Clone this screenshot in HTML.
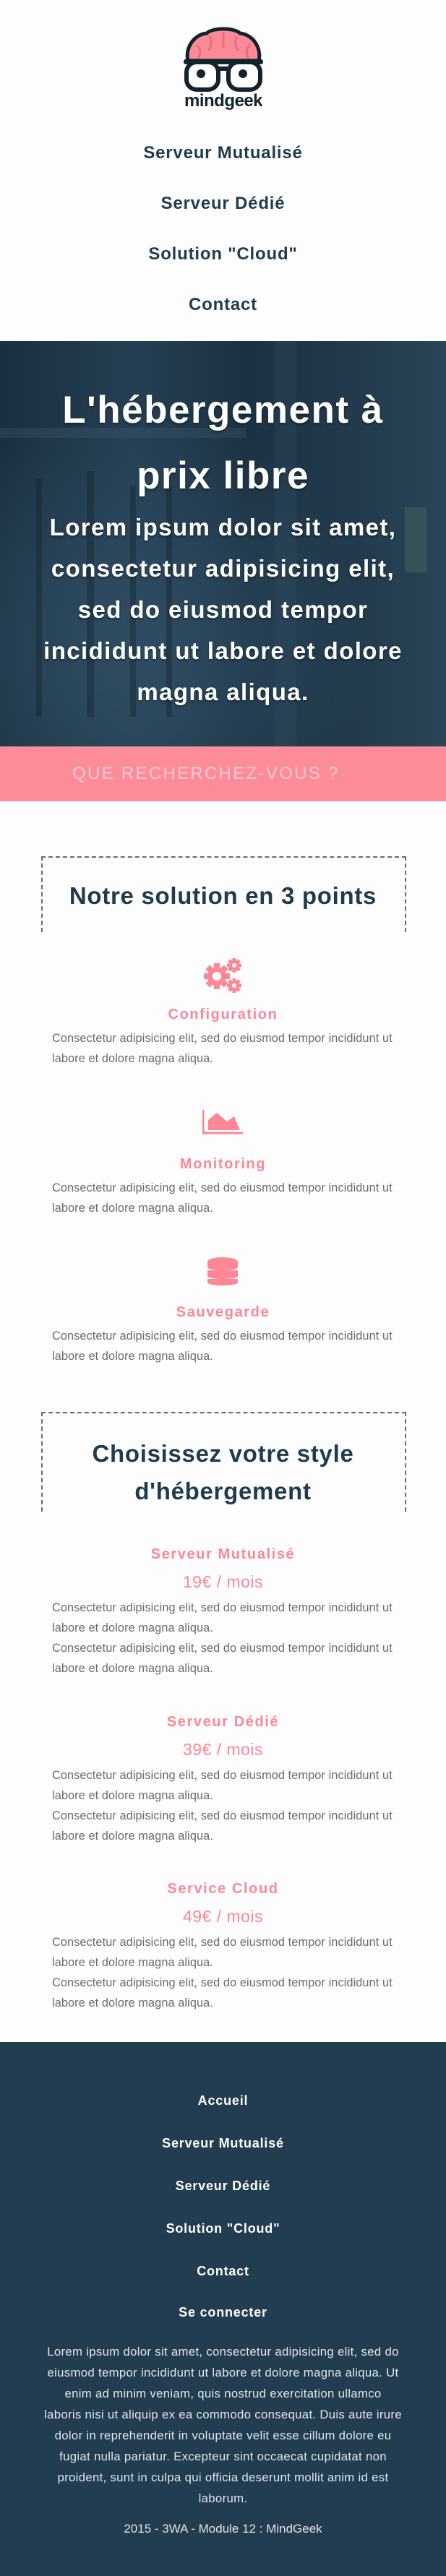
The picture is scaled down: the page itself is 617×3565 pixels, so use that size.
<!DOCTYPE html>
<html><head><meta charset="utf-8">
<style>
*{margin:0;padding:0;box-sizing:border-box}
html,body{width:617px;height:3565px;overflow:hidden;background:#fdfdfd;font-family:"Liberation Sans",sans-serif}
.a{position:absolute;left:0;width:617px;text-align:center}
.nav{font-weight:bold;font-size:24px;letter-spacing:.8px;color:#1f3b4e}
.hero{position:absolute;left:0;top:472px;width:617px;height:561px;overflow:hidden;
background:radial-gradient(ellipse at 30% 75%,#2f4d62 0%,rgba(30,50,66,0) 55%),linear-gradient(90deg,#1a3040 0%,#253f52 30%,#1c3243 55%,#223a4c 80%,#2a4557 100%)}
.hero .bar{position:absolute;background:rgba(70,100,120,.25)}
.h1{color:#fff;font-weight:bold;font-size:53px;letter-spacing:1.5px;line-height:91px;text-shadow:0 2px 3px rgba(0,0,0,.4)}
.h2{color:#fff;font-weight:bold;font-size:33px;letter-spacing:1.4px;line-height:57px;text-shadow:0 2px 3px rgba(0,0,0,.4)}
.pink{position:absolute;left:0;top:1033px;width:617px;height:76px;background:#fc8c9a}
.box{position:absolute;left:57px;width:505px;border:2px dashed #5a6e7c;border-bottom:none}
.t{font-weight:bold;color:#1f3b4e;font-size:33px;letter-spacing:.7px}
.pt{color:#fc8796;font-weight:bold;font-size:20px;letter-spacing:1.6px}
.pr{color:#fc8796;font-size:23px;letter-spacing:.5px}
.tx{position:absolute;left:72px;width:480px;color:#6b6b6b;font-size:16.3px;line-height:28px;text-align:left;letter-spacing:.1px}
.foot{position:absolute;left:0;top:2826px;width:617px;height:739px;background:#223d50}
.fl{color:#fff;font-weight:bold;font-size:18px;letter-spacing:.8px}
</style></head><body>

<svg style="position:absolute;left:252px;top:36px" width="114" height="118" viewBox="0 0 114 118">
<path d="M8 48 C4 30 16 12 34 10 C42 2 72 2 80 10 C98 12 110 30 106 48 Z" fill="#fb8b97" stroke="#12232f" stroke-width="5"/>
<path d="M57 8 L57 30 M38 14 C42 22 40 30 36 34 M76 14 C72 22 74 30 78 34 M20 26 C26 32 26 40 22 44 M94 26 C88 32 88 40 92 44" stroke="#e86e7d" stroke-width="3" fill="none"/>
<rect x="2" y="46" width="110" height="7" rx="3" fill="#12232f"/>
<rect x="6" y="50" width="44" height="38" rx="14" fill="#fff" stroke="#12232f" stroke-width="6"/>
<rect x="64" y="50" width="44" height="38" rx="14" fill="#fff" stroke="#12232f" stroke-width="6"/>
<rect x="48" y="56" width="18" height="6" fill="#12232f"/>
<circle cx="26" cy="66" r="6" fill="#12232f"/><circle cx="84" cy="66" r="6" fill="#12232f"/>
<text x="57" y="111" text-anchor="middle" font-family="Liberation Sans" font-weight="bold" font-size="24" letter-spacing="-0.5" fill="#12232f">mindgeek</text>
</svg>

<div class="a nav" style="top:198px">Serveur Mutualisé</div>
<div class="a nav" style="top:268px">Serveur Dédié</div>
<div class="a nav" style="top:338px">Solution "Cloud"</div>
<div class="a nav" style="top:408px">Contact</div>

<div class="hero">
<div class="bar" style="left:0;top:120px;width:340px;height:14px"></div>
<div class="bar" style="left:50px;top:190px;width:8px;height:330px;background:rgba(20,35,45,.4)"></div>
<div class="bar" style="left:120px;top:180px;width:10px;height:340px;background:rgba(20,35,45,.4)"></div>
<div class="bar" style="left:180px;top:200px;width:8px;height:320px;background:rgba(20,35,45,.4)"></div>
<div class="bar" style="left:230px;top:200px;width:8px;height:320px;background:rgba(20,35,45,.4)"></div>
<div class="bar" style="left:380px;top:0;width:30px;height:561px;background:rgba(60,90,110,.2)"></div>
<div class="bar" style="left:560px;top:230px;width:30px;height:90px;background:rgba(120,150,110,.2)"></div>
</div>
<div class="a h1" style="top:522px">L'hébergement à<br>prix libre</div>
<div class="a h2" style="top:701px">Lorem ipsum dolor sit amet,<br>consectetur adipisicing elit,<br>sed do eiusmod tempor<br>incididunt ut labore et dolore<br>magna aliqua.</div>

<div class="pink"></div>
<div style="position:absolute;left:100px;top:1057px;color:#fdc9d0;font-size:24px;letter-spacing:2.3px">QUE RECHERCHEZ-VOUS ?</div>

<div class="box" style="top:1185px;height:105px"></div>
<div class="a t" style="top:1221px">Notre solution en 3 points</div>

<svg style="position:absolute;left:280px;top:1325px" width="58" height="52" viewBox="0 0 58 52">
<g fill="#fc8796">
<circle cx="20" cy="26" r="13"/>
<g transform="translate(20 26)"><rect x="-4" y="-18" width="8" height="36"/><rect x="-18" y="-4" width="36" height="8"/><rect x="-4" y="-18" width="8" height="36" transform="rotate(45)"/><rect x="-4" y="-18" width="8" height="36" transform="rotate(-45)"/></g>
<g transform="translate(44 11)"><circle r="7"/><rect x="-2.5" y="-10" width="5" height="20"/><rect x="-10" y="-2.5" width="20" height="5"/><rect x="-2.5" y="-10" width="5" height="20" transform="rotate(45)"/><rect x="-2.5" y="-10" width="5" height="20" transform="rotate(-45)"/></g>
<g transform="translate(44 39)"><circle r="7"/><rect x="-2.5" y="-10" width="5" height="20"/><rect x="-10" y="-2.5" width="20" height="5"/><rect x="-2.5" y="-10" width="5" height="20" transform="rotate(45)"/><rect x="-2.5" y="-10" width="5" height="20" transform="rotate(-45)"/></g>
</g>
<circle cx="20" cy="26" r="6" fill="#fff"/><circle cx="44" cy="11" r="3" fill="#fff"/><circle cx="44" cy="39" r="3" fill="#fff"/>
</svg>
<div class="a pt" style="top:1393px">Configuration</div>
<div class="tx" style="top:1423px">Consectetur adipisicing elit, sed do eiusmod tempor incididunt ut labore et dolore magna aliqua.</div>

<svg style="position:absolute;left:280px;top:1536px" width="57" height="34" viewBox="0 0 57 34">
<path d="M1 0 V32 H56" stroke="#fc8796" stroke-width="3" fill="none"/>
<path d="M8 28 V14 L20 4 L34 16 L44 9 L52 28 Z" fill="#fc8796"/>
</svg>
<div class="a pt" style="top:1600px">Monitoring</div>
<div class="tx" style="top:1630px">Consectetur adipisicing elit, sed do eiusmod tempor incididunt ut labore et dolore magna aliqua.</div>

<svg style="position:absolute;left:286px;top:1740px" width="44" height="40" viewBox="0 0 44 40">
<g fill="#fc8796">
<ellipse cx="22" cy="6" rx="21" ry="6"/>
<rect x="1" y="6" width="42" height="8"/><ellipse cx="22" cy="14" rx="21" ry="4"/>
<rect x="1" y="18" width="42" height="8"/><ellipse cx="22" cy="26" rx="21" ry="4"/>
<rect x="1" y="30" width="42" height="5"/><ellipse cx="22" cy="35" rx="21" ry="4"/>
</g></svg>
<div class="a pt" style="top:1805px">Sauvegarde</div>
<div class="tx" style="top:1835px">Consectetur adipisicing elit, sed do eiusmod tempor incididunt ut labore et dolore magna aliqua.</div>

<div class="box" style="top:1954px;height:138px"></div>
<div class="a t" style="top:1986px;line-height:52px">Choisissez votre style<br>d'hébergement</div>

<div class="a pt" style="top:2140px">Serveur Mutualisé</div>
<div class="a pr" style="top:2176px">19€ / mois</div>
<div class="tx" style="top:2211px">Consectetur adipisicing elit, sed do eiusmod tempor incididunt ut labore et dolore magna aliqua.<br>Consectetur adipisicing elit, sed do eiusmod tempor incididunt ut labore et dolore magna aliqua.</div>

<div class="a pt" style="top:2372px">Serveur Dédié</div>
<div class="a pr" style="top:2408px">39€ / mois</div>
<div class="tx" style="top:2443px">Consectetur adipisicing elit, sed do eiusmod tempor incididunt ut labore et dolore magna aliqua.<br>Consectetur adipisicing elit, sed do eiusmod tempor incididunt ut labore et dolore magna aliqua.</div>

<div class="a pt" style="top:2603px">Service Cloud</div>
<div class="a pr" style="top:2639px">49€ / mois</div>
<div class="tx" style="top:2674px">Consectetur adipisicing elit, sed do eiusmod tempor incididunt ut labore et dolore magna aliqua.<br>Consectetur adipisicing elit, sed do eiusmod tempor incididunt ut labore et dolore magna aliqua.</div>

<div class="foot"></div>
<div class="a fl" style="top:2897px">Accueil</div>
<div class="a fl" style="top:2956px">Serveur Mutualisé</div>
<div class="a fl" style="top:3015px">Serveur Dédié</div>
<div class="a fl" style="top:3074px">Solution "Cloud"</div>
<div class="a fl" style="top:3133px">Contact</div>
<div class="a fl" style="top:3190px">Se connecter</div>
<div class="a" style="top:3240px;color:#dfe5ea;font-size:16.8px;letter-spacing:.3px;line-height:29px;white-space:nowrap">Lorem ipsum dolor sit amet, consectetur adipisicing elit, sed do<br>eiusmod tempor incididunt ut labore et dolore magna aliqua. Ut<br>enim ad minim veniam, quis nostrud exercitation ullamco<br>laboris nisi ut aliquip ex ea commodo consequat. Duis aute irure<br>dolor in reprehenderit in voluptate velit esse cillum dolore eu<br>fugiat nulla pariatur. Excepteur sint occaecat cupidatat non<br>proident, sunt in culpa qui officia deserunt mollit anim id est<br>laborum.</div>
<div class="a" style="top:3490px;color:#dfe5ea;font-size:17px">2015 - 3WA - Module 12 : MindGeek</div>
</body></html>
